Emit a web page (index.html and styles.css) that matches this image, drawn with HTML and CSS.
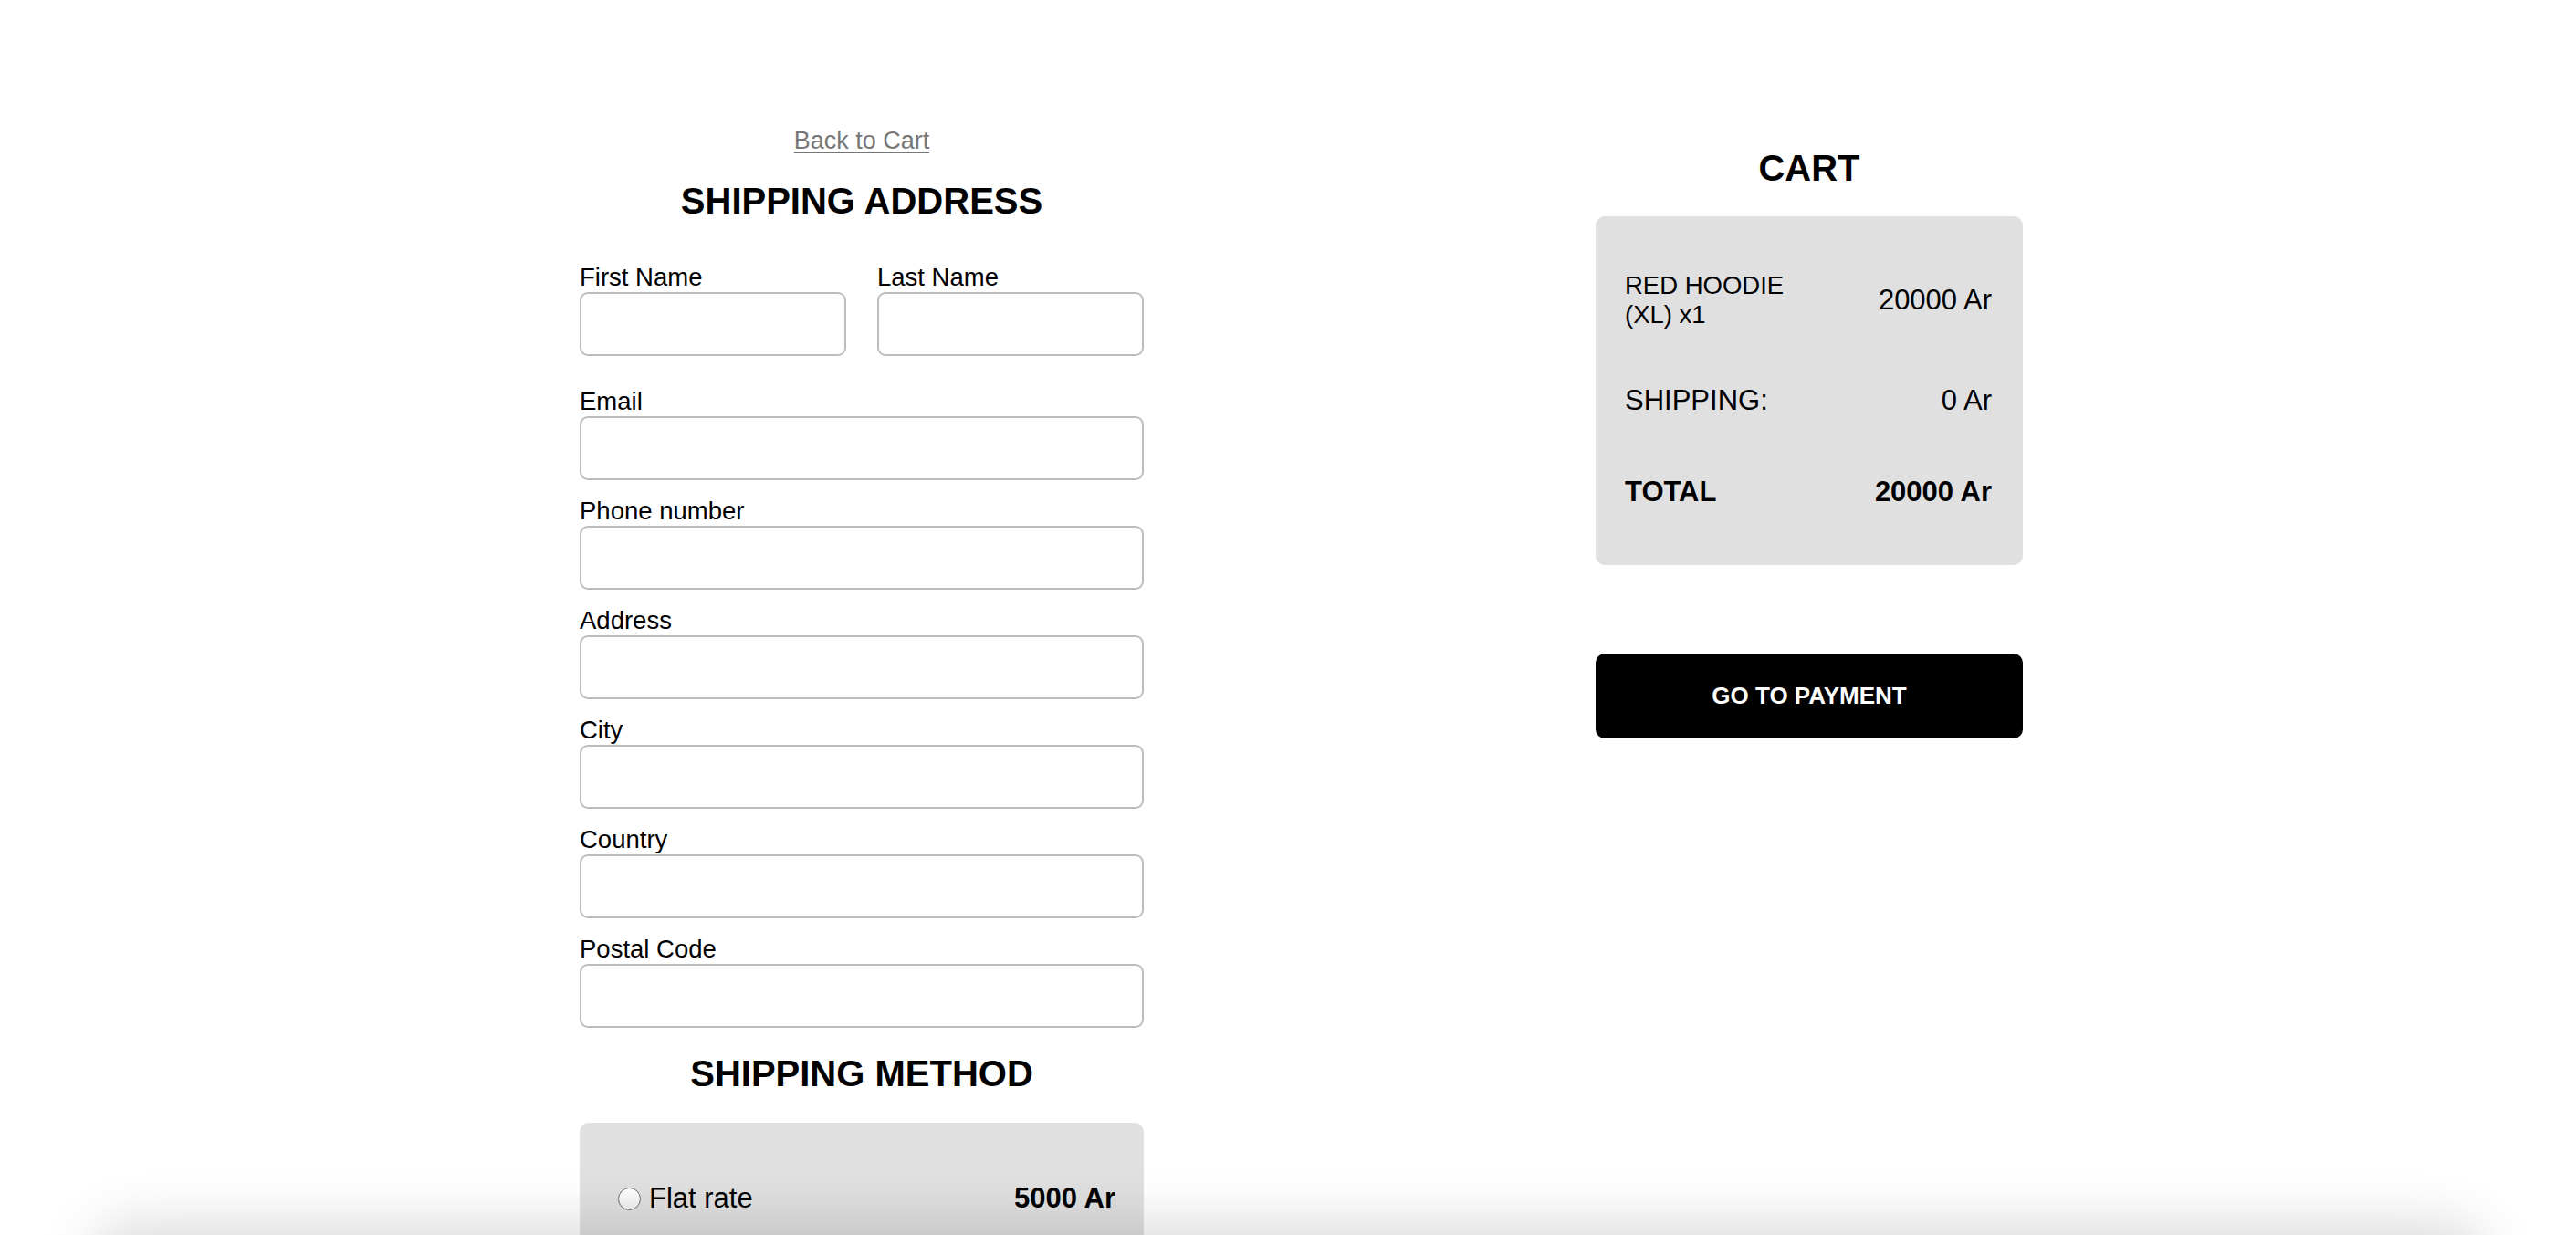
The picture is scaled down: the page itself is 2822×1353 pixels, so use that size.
FILE: index.html
```html
<!DOCTYPE html>
<html lang="en">
<head>
<meta charset="utf-8">
<title>Checkout</title>
<link rel="stylesheet" href="styles.css">
</head>
<body>
<main class="page">
  <section class="left">
    <a class="back" href="#">Back to Cart</a>
    <h2 class="title">SHIPPING ADDRESS</h2>
    <form class="form">
      <div class="row2">
        <div class="field"><label>First Name</label><input type="text"></div>
        <div class="field"><label>Last Name</label><input type="text"></div>
      </div>
      <div class="field"><label>Email</label><input type="text"></div>
      <div class="field"><label>Phone number</label><input type="text"></div>
      <div class="field"><label>Address</label><input type="text"></div>
      <div class="field"><label>City</label><input type="text"></div>
      <div class="field"><label>Country</label><input type="text"></div>
      <div class="field"><label>Postal Code</label><input type="text"></div>
    </form>
    <h2 class="title method-title">SHIPPING METHOD</h2>
    <div class="method-box">
      <div class="method-row">
        <label class="method-label"><input class="radio" type="radio" name="ship">Flat rate</label>
        <span class="method-price">5000 Ar</span>
      </div>
    </div>
  </section>
  <aside class="right">
    <h2 class="title cart-title">CART</h2>
    <div class="panel">
      <div class="item-row">
        <span class="item-name">RED HOODIE (XL) x1</span>
        <span class="item-price">20000 Ar</span>
      </div>
      <div class="sum-row ship-row">
        <span>SHIPPING:</span>
        <span>0 Ar</span>
      </div>
      <div class="sum-row total-row">
        <span>TOTAL</span>
        <span>20000 Ar</span>
      </div>
    </div>
    <button class="pay" type="button">GO TO PAYMENT</button>
  </aside>
</main>
<div class="bottom-shade"></div>
</body>
</html>
```

FILE: styles.css
```css
html, body {
  margin: 0;
  padding: 0;
  background: #ffffff;
}
body {
  font-family: "Liberation Sans", Arial, Helvetica, sans-serif;
  color: #000;
}
.page {
  display: flex;
  align-items: flex-start;
  gap: 495px;
  padding: 139px 0 0 635px;
}
.left {
  width: 618px;
  flex: none;
}
.right {
  width: 468px;
  flex: none;
  margin-top: 22px;
}
.back {
  display: block;
  width: max-content;
  margin: 0 auto;
  font-size: 27px;
  line-height: 31px;
  color: #777777;
  text-decoration: underline;
  text-decoration-thickness: 2px;
  text-underline-offset: 3px;
}
.title {
  margin: 27px 0 0;
  font-size: 40px;
  line-height: 46px;
  font-weight: bold;
  text-align: center;
}
.form {
  margin-top: 45px;
}
.row2 {
  display: grid;
  grid-template-columns: 1fr 1fr;
  column-gap: 34px;
  margin-bottom: 34px;
}
.row2 .field {
  margin-bottom: 0;
}
.field {
  margin-bottom: 18px;
}
.field label {
  display: block;
  font-size: 27.5px;
  line-height: 32px;
}
.field input {
  display: block;
  width: 100%;
  height: 70px;
  box-sizing: border-box;
  border: 2px solid #bdbdbd;
  border-radius: 9px;
  background: #fff;
  margin: 0;
  padding: 0 14px;
  font-size: 27px;
  font-family: inherit;
}
.method-title {
  margin-top: 27px;
}
.method-box {
  margin-top: 31px;
  background: #e0e0e0;
  border-radius: 10px;
  padding: 32px 31px 32px 32px;
}
.method-row {
  display: flex;
  justify-content: space-between;
  align-items: center;
  padding: 33px 0;
  font-size: 31px;
  line-height: 36px;
}
.method-label {
  display: flex;
  align-items: center;
}
.radio {
  appearance: none;
  -webkit-appearance: none;
  width: 25px;
  height: 25px;
  margin: 0 9px 0 10px;
  border: 1.5px solid #6f6f6f;
  border-radius: 50%;
  background: linear-gradient(#ffffff, #f0f0f0);
  box-sizing: border-box;
}
.method-price {
  font-weight: bold;
}
.cart-title {
  margin-top: 0;
}
.panel {
  margin-top: 30px;
  background: #e0e0e0;
  border-radius: 10px;
  padding: 30px 34px 32px 32px;
}
.item-row {
  display: flex;
  justify-content: space-between;
  align-items: center;
  padding: 30px 0 31px;
}
.item-name {
  max-width: 50%;
  font-size: 27.5px;
  line-height: 32px;
}
.item-price {
  font-size: 31px;
  line-height: 36px;
}
.sum-row {
  display: flex;
  justify-content: space-between;
  align-items: center;
  font-size: 31px;
  line-height: 36px;
  padding: 32px 0;
}
.ship-row {
  padding-top: 29px;
}
.total-row {
  font-weight: bold;
  padding-bottom: 30px;
}
.pay {
  display: block;
  width: 100%;
  height: 93px;
  margin-top: 97px;
  background: #000;
  color: #fff;
  border: none;
  border-radius: 10px;
  font-family: inherit;
  font-size: 26px;
  font-weight: bold;
  cursor: pointer;
}
.bottom-shade {
  position: fixed;
  left: 110px;
  right: 110px;
  bottom: -70px;
  height: 70px;
  border-radius: 40px;
  box-shadow: 0 0 60px 14px rgba(0, 0, 0, 0.14);
  pointer-events: none;
}
```
